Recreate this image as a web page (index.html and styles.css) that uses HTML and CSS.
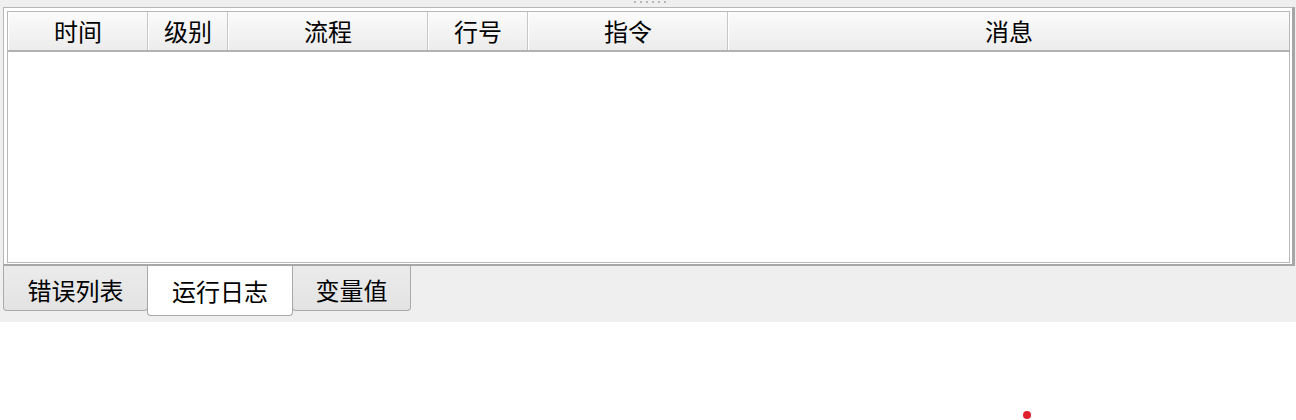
FILE: index.html
```html
<!DOCTYPE html>
<html lang="zh">
<head>
<meta charset="utf-8">
<title>运行日志</title>
<link rel="stylesheet" href="styles.css">
</head>
<body>
<div class="panel">
  <div class="grip"><span></span><span></span><span></span><span></span><span></span><span></span></div>
  <div class="frame">
    <div class="table">
      <div class="thead">
        <div class="th c-time">时间</div>
        <div class="th c-level">级别</div>
        <div class="th c-flow">流程</div>
        <div class="th c-line">行号</div>
        <div class="th c-cmd">指令</div>
        <div class="th c-msg">消息</div>
      </div>
      <div class="tbody"></div>
    </div>
  </div>
  <div class="tabs">
    <div class="tab t1">错误列表</div>
    <div class="tab t2 active">运行日志</div>
    <div class="tab t3">变量值</div>
  </div>
</div>
<div class="below">
  <span class="dot"></span>
</div>
</body>
</html>
```
FILE: styles.css
```css
html, body {
  margin: 0;
  padding: 0;
  background: #ffffff;
  font-family: "Noto Sans CJK SC", "Noto Sans", sans-serif;
  color: #000;
}
.panel {
  background: #efefef;
  height: 322px;
  width: 1296px;
  box-sizing: border-box;
  padding-top: 7px;
  position: relative;
}
.grip {
  position: absolute;
  left: 634px;
  top: 1px;
  display: flex;
  gap: 4px;
}
.grip span {
  width: 2px;
  height: 2px;
  background: #b8b8b8;
}
.frame {
  margin-left: 3px;
  width: 1292px;
  height: 259px;
  box-sizing: border-box;
  background: #ffffff;
  border-style: solid;
  border-color: #b6b6b6 #a6a6a6 #a8a8a8 #b6b6b6;
  border-width: 1px 3px 2px 1px;
  padding: 3px 2px 1px 3px;
}
.table {
  height: 100%;
  box-sizing: border-box;
  border: 1px solid #b8b8b8;
  display: flex;
  flex-direction: column;
}
.thead {
  display: flex;
  height: 40px;
  box-sizing: border-box;
  border-bottom: 2px solid #b2b2b2;
  background: linear-gradient(#fbfbfb, #ececec);
}
.th {
  box-sizing: border-box;
  font-size: 24px;
  line-height: 38px;
  text-align: center;
  border-right: 1px solid #c6c6c6;
  box-shadow: inset 1px 0 0 #ffffff;
  padding-left: 1px;
}
.c-time { width: 140px; }
.c-level { width: 80px; }
.c-flow { width: 200px; }
.c-line { width: 100px; }
.c-cmd { width: 200px; }
.c-msg { flex: 1; border-right: none; }
.tbody {
  flex: 1;
  background: #fff;
}
.tabs {
  display: flex;
  padding-left: 3px;
  align-items: flex-start;
}
.tab {
  box-sizing: border-box;
  height: 45px;
  font-size: 24px;
  line-height: 48px;
  text-align: center;
  background: linear-gradient(#ebebeb, #e3e3e3);
  border: 1px solid #aaaaaa;
  border-top: none;
  border-radius: 0 0 4px 4px;
}
.t1 { width: 145px; }
.t2 { width: 146px; margin-left: -1px; }
.t3 { width: 119px; margin-left: -1px; }
.tab.active {
  background: #ffffff;
  height: 50px;
  line-height: 50px;
  position: relative;
  z-index: 1;
  border-color: #a8a8a8;
}
.below {
  height: 98px;
  position: relative;
}
.dot {
  position: absolute;
  left: 1023px;
  top: 89px;
  width: 8px;
  height: 8px;
  border-radius: 50%;
  background: #e0202a;
}
```
